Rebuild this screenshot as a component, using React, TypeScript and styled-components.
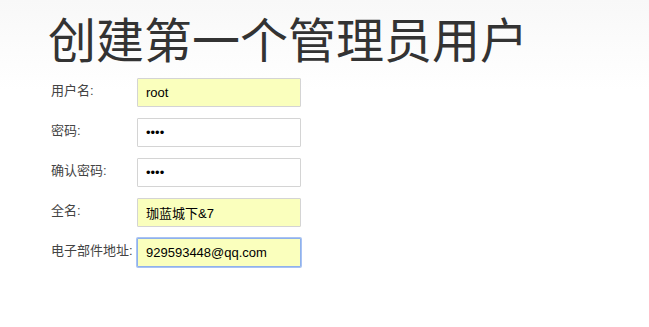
import React from 'react';
import styled, { createGlobalStyle } from 'styled-components';

const GlobalStyle = createGlobalStyle`
  html, body {
    margin: 0;
    padding: 0;
  }
  body {
    min-height: 327px;
    background: linear-gradient(to bottom, #f8f8f8 0px, #ffffff 90px);
    font-family: 'Liberation Sans', 'Noto Sans CJK SC', sans-serif;
    color: #333;
  }
`;

const Page = styled.div`
  padding: 6px 0 0 48px;
`;

const Title = styled.h1`
  margin: 0 0 10px;
  font-family: 'Noto Sans CJK SC', sans-serif;
  font-weight: 400;
  font-size: 48px;
  line-height: 62px;
  color: #333;
`;

const Form = styled.form`
  display: flex;
  flex-direction: column;
  gap: 11px;
  padding-left: 3px;
`;

const Row = styled.div`
  display: flex;
  align-items: flex-start;
`;

const Label = styled.label`
  width: 86px;
  padding-top: 4px;
  font-family: 'Liberation Sans', 'Noto Sans CJK SC', sans-serif;
  font-size: 13px;
  line-height: 17px;
  color: #444;
`;

const Input = styled.input<{ $filled?: boolean; $focused?: boolean }>`
  box-sizing: border-box;
  width: 164px;
  height: 29px;
  margin: 0;
  padding: 0 8px;
  font-family: 'Liberation Sans', 'Noto Sans CJK SC', sans-serif;
  font-size: 13px;
  color: #000;
  background: ${p => (p.$filled ? '#faffbd' : '#fff')};
  border: 1px solid ${p => (p.$focused ? '#8fb1ec' : '#d4d4d4')};
  border-radius: 1px;
  box-shadow: ${p => (p.$focused ? '0 0 0 1px #a9c3f3' : 'none')};
  outline: none;
`;

const FIELDS = [
  { label: '用户名:', type: 'text', value: 'root', filled: true },
  { label: '密码:', type: 'password', value: '1234' },
  { label: '确认密码:', type: 'password', value: '1234' },
  { label: '全名:', type: 'text', value: '珈蓝城下&7', filled: true },
  { label: '电子部件地址:', type: 'text', value: '929593448@qq.com', filled: true, focused: true },
];

function App() {
  return (
    <>
      <GlobalStyle />
      <Page>
        <Title>创建第一个管理员用户</Title>
        <Form onSubmit={e => e.preventDefault()}>
          {FIELDS.map((f, i) => (
            <Row key={i}>
              <Label htmlFor={'f' + i}>{f.label}</Label>
              <Input
                id={'f' + i}
                type={f.type}
                defaultValue={f.value}
                spellCheck={false}
                $filled={f.filled}
                $focused={f.focused}
              />
            </Row>
          ))}
        </Form>
      </Page>
    </>
  );
}

export default App;
